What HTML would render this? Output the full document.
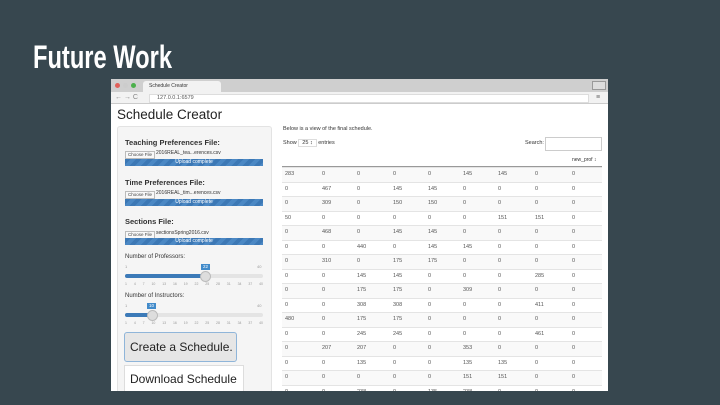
<!DOCTYPE html>
<html><head><style>
*{margin:0;padding:0;box-sizing:border-box}
body{width:720px;height:405px;background:#37474f;position:relative;overflow:hidden;font-family:"Liberation Sans",sans-serif}
.a{position:absolute}
.t{font-size:6px;color:#333;white-space:nowrap}
.lab{font-size:7.5px;font-weight:bold;color:#333;white-space:nowrap}
.bar{height:7px;background:repeating-linear-gradient(135deg,#3c78b5 0 4px,#4b88c4 4px 8px);color:#fff;font-size:5px;text-align:center;line-height:7px}
.cf{font-size:4.5px;border:1px solid #bbb;background:#f8f8f8;padding:0 2px;line-height:6px;color:#444}
.track{height:4px;background:#e4e4e4;border-radius:2px}
.fill{height:4px;background:#3c7ab8;border-radius:2px}
.knob{width:11px;height:11px;border-radius:50%;background:#ddd;border:1px solid #bbb}
.tag{font-size:4.5px;background:#428bca;color:#fff;padding:0 2px;line-height:6px}
.tk{font-size:3.5px;color:#999;width:138px;display:flex;justify-content:space-between}
</style></head><body>
<div class="a" style="left:33px;top:39px;font-size:32px;color:#fff;transform:scaleX(0.74);transform-origin:left top;font-weight:bold">Future Work</div>

<div class="a" style="left:111px;top:79px;width:497px;height:312px;background:#fff;overflow:hidden">
 <div class="a" style="left:0;top:0;width:497px;height:13px;background:#cfcfcf"></div>
 <div class="a" style="left:4px;top:4px;width:5px;height:5px;border-radius:50%;background:#e0605a"></div>
 <div class="a" style="left:12px;top:4px;width:5px;height:5px;border-radius:50%;background:#ccc"></div>
 <div class="a" style="left:20px;top:4px;width:5px;height:5px;border-radius:50%;background:#4cb04c"></div>
 <div class="a" style="left:32px;top:2px;width:78px;height:11px;background:#f2f2f2;border-radius:3px 3px 0 0"></div>
 <div class="a t" style="left:38px;top:4px;font-size:5px">Schedule Creator</div>
 <div class="a" style="left:481px;top:2px;width:14px;height:9px;border:1px solid #999;background:#ddd"></div>
 <div class="a" style="left:0;top:13px;width:497px;height:12px;background:#f2f2f2;border-bottom:1px solid #ccc"></div>
 <div class="a t" style="left:4px;top:15px;font-size:7px;color:#888">← → C</div>
 <div class="a" style="left:38px;top:15px;width:440px;height:9px;background:#fff;border:1px solid #ddd"></div>
 <div class="a t" style="left:46px;top:16px;font-size:5.5px;color:#555">127.0.0.1:6579</div>
 <div class="a t" style="left:485px;top:15px;font-size:7px;color:#666">≡</div>

 <div class="a" style="left:6px;top:28px;font-size:13.5px;color:#222">Schedule Creator</div>

 <div class="a" style="left:6px;top:47px;width:155px;height:270px;background:#f5f5f5;border:1px solid #e3e3e3;border-radius:3px"></div>
 <div class="a lab" style="left:14px;top:59px">Teaching Preferences File:</div>
 <div class="a cf" style="left:14px;top:72px">Choose File</div><div class="a t" style="left:45px;top:71px;font-size:5px">2016REAL_tea...erences.csv</div>
 <div class="a bar" style="left:14px;top:80px;width:138px">Upload complete</div>
 <div class="a lab" style="left:14px;top:99px">Time Preferences File:</div>
 <div class="a cf" style="left:14px;top:112px">Choose File</div><div class="a t" style="left:45px;top:111px;font-size:5px">2016REAL_tim...erences.csv</div>
 <div class="a bar" style="left:14px;top:120px;width:138px">Upload complete</div>
 <div class="a lab" style="left:14px;top:138px">Sections File:</div>
 <div class="a cf" style="left:14px;top:152px">Choose File</div><div class="a t" style="left:45px;top:151px;font-size:5px">sectionsSpring2016.csv</div>
 <div class="a bar" style="left:14px;top:159px;width:138px">Upload complete</div>
 <div class="a t" style="left:14px;top:175px;font-size:6px">Number of Professors:</div>
 <div class="a t" style="left:14px;top:185px;font-size:4px;color:#999">1</div><div class="a t" style="left:146px;top:185px;font-size:4px;color:#999">40</div>
 <div class="a tag" style="left:90px;top:185px">22</div>
 <div class="a" style="left:14px;top:195px;width:138px"><div class="track"></div></div>
 <div class="a" style="left:14px;top:195px;width:81px"><div class="fill"></div></div>
 <div class="a knob" style="left:89px;top:192px"></div>
 <div class="a t tk" style="left:14px;top:203px"><span>1</span><span>4</span><span>7</span><span>10</span><span>13</span><span>16</span><span>19</span><span>22</span><span>25</span><span>28</span><span>31</span><span>34</span><span>37</span><span>40</span></div>
 <div class="a t" style="left:14px;top:214px;font-size:6px">Number of Instructors:</div>
 <div class="a t" style="left:14px;top:224px;font-size:4px;color:#999">1</div><div class="a t" style="left:146px;top:224px;font-size:4px;color:#999">40</div>
 <div class="a tag" style="left:36px;top:224px">10</div>
 <div class="a" style="left:14px;top:234px;width:138px"><div class="track"></div></div>
 <div class="a" style="left:14px;top:234px;width:28px"><div class="fill"></div></div>
 <div class="a knob" style="left:36px;top:231px"></div>
 <div class="a t tk" style="left:14px;top:242px"><span>1</span><span>4</span><span>7</span><span>10</span><span>13</span><span>16</span><span>19</span><span>22</span><span>25</span><span>28</span><span>31</span><span>34</span><span>37</span><span>40</span></div>
 <div class="a" style="left:13px;top:253px;width:113px;height:30px;background:#e6e6e6;border:1px solid #8fb5d9;border-radius:3px;font-size:12px;color:#222;line-height:28px;padding-left:5px">Create a Schedule.</div>
 <div class="a" style="left:13px;top:286px;width:120px;height:28px;background:#fff;border:1px solid #ddd;font-size:12px;color:#222;line-height:26px;padding-left:5px">Download Schedule</div>

 <div class="a t" style="left:172px;top:47px;font-size:5.5px">Below is a view of the final schedule.</div>
 <div class="a t" style="left:172px;top:61px;font-size:5.5px">Show <span style="border:1px solid #ddd;padding:0 3px">25 ↕</span> entries</div>
 <div class="a t" style="left:414px;top:61px;font-size:5.5px">Search:</div>
 <div class="a" style="left:434px;top:58px;width:57px;height:14px;border:1px solid #ccc"></div>
 <div class="a" style="left:171px;top:73px;width:320px;height:15px;border-bottom:1px solid #999"></div>
 <div class="a t" style="left:461px;top:78px;font-size:5px">new_prof ↕</div>
 <div id="rows"></div>
</div>
<script>
var d=[["283","0","0","0","0","145","145","0","0"],["0","467","0","145","145","0","0","0","0"],["0","309","0","150","150","0","0","0","0"],["50","0","0","0","0","0","151","151","0"],["0","468","0","145","145","0","0","0","0"],["0","0","440","0","145","145","0","0","0"],["0","310","0","175","175","0","0","0","0"],["0","0","145","145","0","0","0","285","0"],["0","0","175","175","0","309","0","0","0"],["0","0","308","308","0","0","0","411","0"],["480","0","175","175","0","0","0","0","0"],["0","0","245","245","0","0","0","461","0"],["0","207","207","0","0","353","0","0","0"],["0","0","135","0","0","135","135","0","0"],["0","0","0","0","0","151","151","0","0"],["0","0","238","0","135","238","0","0","0"]];
var xs=[174,211,246,282,317,352,387,424,461],h='';
d.forEach(function(r,i){var y=88+i*14.5;h+='<div class="a" style="left:171px;top:'+y+'px;width:320px;height:14.5px;background:'+(i%2?'#fff':'#f9f9f9')+';border-top:1px solid #e4e4e4"></div>';r.forEach(function(v,j){h+='<div class="a t" style="left:'+xs[j]+'px;top:'+(y+4)+'px;font-size:5.5px;color:#555">'+v+'</div>'})});
document.getElementById('rows').outerHTML=h;
</script>
</body></html>
